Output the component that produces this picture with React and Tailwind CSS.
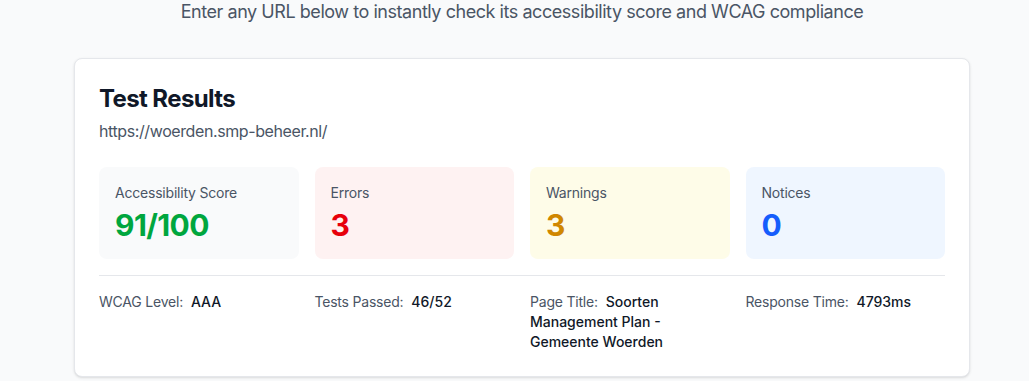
const stats = [
  { label: "Accessibility Score", value: "91/100", box: "bg-gray-50", text: "text-green-600" },
  { label: "Errors", value: "3", box: "bg-red-50", text: "text-red-600" },
  { label: "Warnings", value: "3", box: "bg-yellow-50", text: "text-yellow-600" },
  { label: "Notices", value: "0", box: "bg-blue-50", text: "text-blue-600" },
];

const details = [
  { label: "WCAG Level:", value: "AAA" },
  { label: "Tests Passed:", value: "46/52" },
  { label: "Page Title:", value: "Soorten Management Plan - Gemeente Woerden" },
  { label: "Response Time:", value: "4793ms" },
];

export default function App() {
  return (
    <div className="min-h-screen bg-gray-50 pl-[15px] font-['Inter',sans-serif]">
      <div className="max-w-4xl mx-auto">
        <p className="-mt-[2px] text-lg tracking-[-0.025em] text-gray-600 text-center">
          Enter any URL below to instantly check its accessibility score and WCAG compliance
        </p>

        {/* results card */}
        <div className="mt-8 bg-white rounded-lg border border-gray-200 shadow-sm p-6">
          <h2 className="text-2xl font-bold tracking-[-0.025em] text-gray-900">Test Results</h2>
          <p className="mt-1 text-base tracking-[-0.025em] text-gray-600">https://woerden.smp-beheer.nl/</p>

          <div className="mt-6 grid grid-cols-4 gap-4">
            {stats.map((s) => (
              <div key={s.label} className={`${s.box} rounded-lg p-4`}>
                <div className="text-sm tracking-[-0.015em] text-gray-600">{s.label}</div>
                <div className={`mt-1 text-3xl font-bold tracking-[-0.02em] ${s.text}`}>{s.value}</div>
              </div>
            ))}
          </div>

          <div className="mt-4 border-t border-gray-200 pt-4 grid grid-cols-4 gap-4 text-sm leading-5">
            {details.map((d) => (
              <div key={d.label}>
                <span className="tracking-[-0.015em] text-gray-600">{d.label}</span>{" "}
                <span className="ml-1 font-medium text-gray-900">{d.value}</span>
              </div>
            ))}
          </div>
        </div>
      </div>
    </div>
  );
}
